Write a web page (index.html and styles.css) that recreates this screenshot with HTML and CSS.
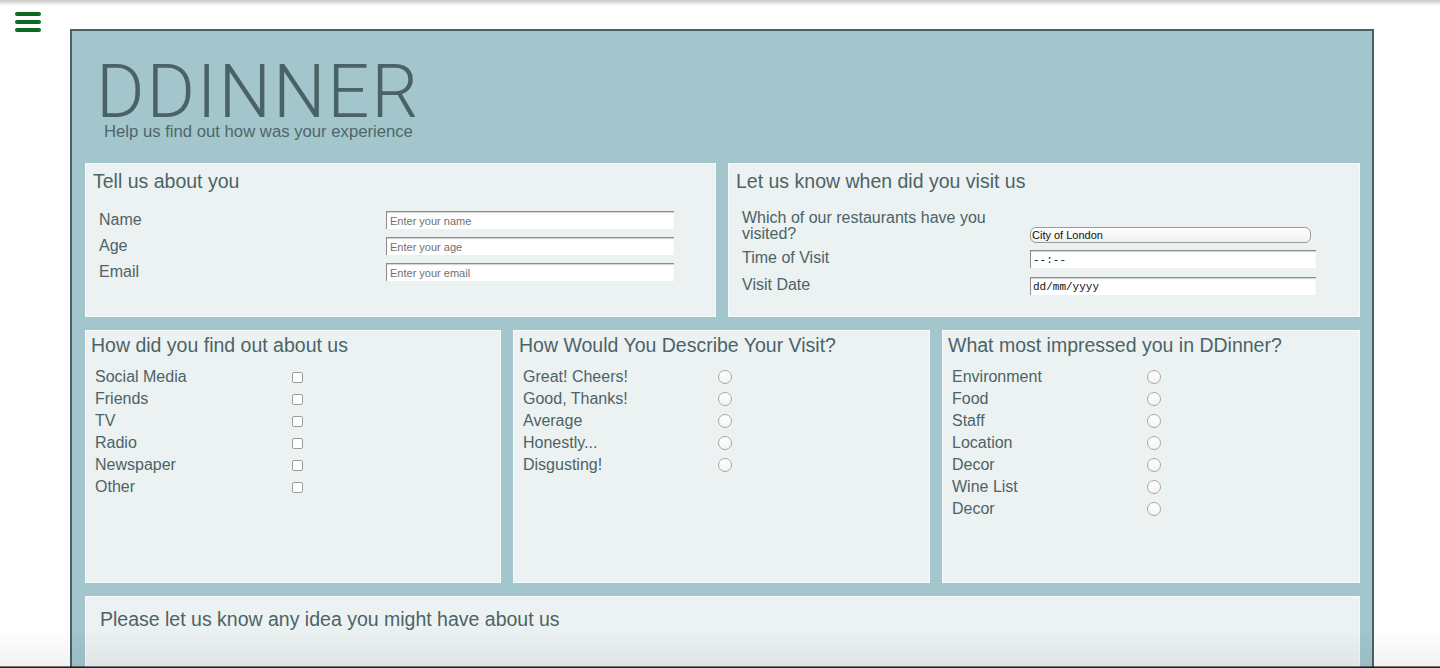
FILE: index.html
```html
<!DOCTYPE html>
<html lang="en">
<head>
<meta charset="utf-8">
<title>DDinner Survey</title>
<link rel="stylesheet" href="styles.css">
</head>
<body>
<div class="edge-top"></div>
<div class="edge-bottom"></div>
<button class="menu" aria-label="Menu">
  <svg width="26" height="20" viewBox="0 0 26 20"><rect x="0" y="0" width="26" height="4" rx="2"/><rect x="0" y="8" width="26" height="4" rx="2"/><rect x="0" y="16" width="26" height="4" rx="2"/></svg>
</button>
<main class="survey">
  <header class="brand">
    <h1 class="brand-title">DDINNER</h1>
    <p class="brand-sub">Help us find out how was your experience</p>
  </header>

  <div class="row row-two">
    <section class="panel panel-form">
      <h2 class="panel-title">Tell us about you</h2>
      <div class="fields fields-about">
        <label class="field-label" for="name">Name</label>
        <input class="text-input" id="name" type="text" placeholder="Enter your name">
        <label class="field-label" for="age">Age</label>
        <input class="text-input" id="age" type="text" placeholder="Enter your age">
        <label class="field-label" for="email">Email</label>
        <input class="text-input" id="email" type="text" placeholder="Enter your email">
      </div>
    </section>
    <section class="panel panel-form">
      <h2 class="panel-title">Let us know when did you visit us</h2>
      <div class="fields fields-visit">
        <label class="field-label" for="rest">Which of our restaurants have you visited?</label>
        <div class="select-box" id="rest">City of London</div>
        <label class="field-label" for="time">Time of Visit</label>
        <input class="text-input mono" id="time" type="text" value="--:--">
        <label class="field-label row-last" for="date">Visit Date</label>
        <input class="text-input mono row-last" id="date" type="text" value="dd/mm/yyyy">
      </div>
    </section>
  </div>

  <div class="row row-three">
    <section class="panel panel-list">
      <h2 class="panel-title">How did you find out about us</h2>
      <div class="options">
        <span class="opt-label">Social Media</span><span class="check"></span>
        <span class="opt-label">Friends</span><span class="check"></span>
        <span class="opt-label">TV</span><span class="check"></span>
        <span class="opt-label">Radio</span><span class="check"></span>
        <span class="opt-label">Newspaper</span><span class="check"></span>
        <span class="opt-label">Other</span><span class="check"></span>
      </div>
    </section>
    <section class="panel panel-list">
      <h2 class="panel-title">How Would You Describe Your Visit?</h2>
      <div class="options">
        <span class="opt-label">Great! Cheers!</span><span class="radio"></span>
        <span class="opt-label">Good, Thanks!</span><span class="radio"></span>
        <span class="opt-label">Average</span><span class="radio"></span>
        <span class="opt-label">Honestly...</span><span class="radio"></span>
        <span class="opt-label">Disgusting!</span><span class="radio"></span>
      </div>
    </section>
    <section class="panel panel-list">
      <h2 class="panel-title">What most impressed you in DDinner?</h2>
      <div class="options">
        <span class="opt-label">Environment</span><span class="radio"></span>
        <span class="opt-label">Food</span><span class="radio"></span>
        <span class="opt-label">Staff</span><span class="radio"></span>
        <span class="opt-label">Location</span><span class="radio"></span>
        <span class="opt-label">Decor</span><span class="radio"></span>
        <span class="opt-label">Wine List</span><span class="radio"></span>
        <span class="opt-label">Decor</span><span class="radio"></span>
      </div>
    </section>
  </div>

  <section class="panel panel-ideas">
    <h2 class="panel-title">Please let us know any idea you might have about us</h2>
  </section>
</main>
</body>
</html>
```

FILE: styles.css
```css
html, body {
  margin: 0;
  padding: 0;
  background: #ffffff;
  height: 668px;
  overflow: hidden;
}
body {
  font-family: "Liberation Sans", Arial, sans-serif;
  color: #4c6367;
}
.edge-top {
  position: fixed;
  left: 0; top: 0; right: 0;
  height: 6px;
  background: linear-gradient(to bottom, rgba(0,0,0,0.22), rgba(0,0,0,0));
  z-index: 5;
  pointer-events: none;
}
.edge-bottom {
  position: fixed;
  left: 0; right: 0; bottom: 0;
  height: 40px;
  background: linear-gradient(to bottom, rgba(0,0,0,0), rgba(0,0,0,0.05) 95%, rgba(30,30,30,0.9) 97%, #111 100%);
  z-index: 5;
  pointer-events: none;
}
.menu {
  position: absolute;
  left: 15px;
  top: 12px;
  width: 26px;
  height: 20px;
  padding: 0;
  border: 0;
  background: none;
  line-height: 0;
}
.menu svg { fill: #0a6a1f; }

.survey {
  box-sizing: border-box;
  width: 1304px;
  margin: 29px 0 0 70px;
  border: 2px solid #4a6267;
  border-bottom: 0;
  background: #a2c6cc;
  padding: 0 12px 0 13px;
  min-height: 700px;
}
.brand {
  padding: 33px 0 22px 11px;
}
.brand-title {
  margin: 0;
  font-family: Roboto, "Liberation Sans", sans-serif;
  font-weight: 300;
  font-size: 74px;
  line-height: 56px;
  letter-spacing: 1.9px;
  color: #4a6266;
}
.brand-sub {
  margin: 3px 0 0 8px;
  font-size: 16.7px;
  line-height: 18px;
  color: #4f6569;
}

.row {
  display: grid;
  gap: 12px;
  margin-bottom: 13px;
}
.row-two { grid-template-columns: 631px 632px; height: 154px; }
.row-three { grid-template-columns: 416px 417px 418px; height: 253px; }

.panel {
  box-sizing: border-box;
  background: #ecf2f2;
  border: 1px solid #f7fafa;
}
.panel-title {
  margin: 0;
  font-weight: normal;
  font-size: 19.5px;
  line-height: 22px;
  color: #4c6367;
}
.panel-form { padding: 6px 7px; }
.panel-list { padding: 3px 5px; }
.panel-ideas { padding: 11px 14px; height: 120px; }

.fields {
  display: grid;
  margin-left: 6px;
  align-items: center;
}
.fields-about {
  grid-template-columns: 287px 288px;
  grid-auto-rows: 26px;
  margin-top: 14.5px;
}
.fields-visit {
  grid-template-columns: 288px 286px;
  margin-top: 18px;
  row-gap: 7px;
  align-items: last baseline;
}
.fields-visit .row-last { margin-top: 2px; }
.field-label {
  font-size: 16px;
  line-height: 16px;
  color: #4c6367;
}
.text-input {
  box-sizing: border-box;
  width: 288px;
  height: 18px;
  margin: 0;
  padding: 1px 3px 0 3px;
  border: 0;
  border-top: 1px solid #8c8c8c;
  border-left: 1px solid #8c8c8c;
  box-shadow: inset 0 1px 1px rgba(0,0,0,0.18);
  background: #ffffff;
  font-family: "Liberation Sans", Arial, sans-serif;
  font-size: 11px;
  color: #111;
  outline: none;
}
.fields-visit .text-input { width: 286px; }
.text-input::placeholder { color: #6f6f6f; }
.text-input.mono {
  font-family: "Liberation Mono", "Courier New", monospace;
  font-size: 11px;
  padding-left: 2px;
}
.select-box {
  box-sizing: border-box;
  width: 281px;
  height: 16px;
  border: 1px solid #9a9a9a;
  border-radius: 6px;
  background: linear-gradient(#ffffff, #f1f1f1);
  font-size: 11px;
  line-height: 14px;
  padding-left: 1px;
  color: #111;
}

.options {
  display: grid;
  grid-template-columns: 197px 20px;
  grid-auto-rows: 22px;
  align-items: center;
  margin: 10px 0 0 4px;
}
.opt-label {
  font-size: 16px;
  line-height: 22px;
  color: #4c6367;
}
.check {
  box-sizing: border-box;
  width: 11px;
  height: 11px;
  border: 1px solid #9d9d9d;
  border-radius: 2px;
  background: #ffffff;
}
.radio {
  box-sizing: border-box;
  width: 14px;
  height: 14px;
  margin-left: -2px;
  border: 1px solid #a8a8a8;
  border-radius: 50%;
  background: linear-gradient(#ffffff, #f4f4f4);
}
```
